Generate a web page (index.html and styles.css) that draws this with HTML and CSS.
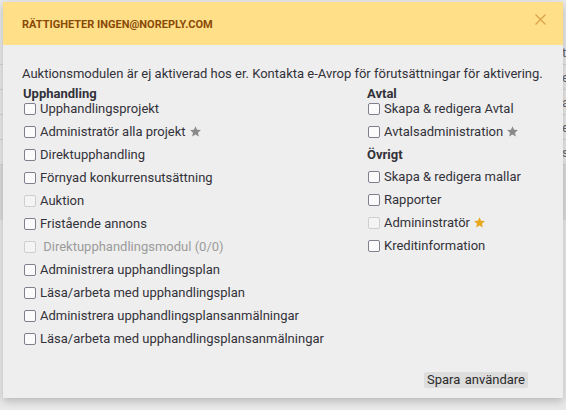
FILE: index.html
```html
<!DOCTYPE html>
<html lang="sv">
<head>
<meta charset="utf-8">
<title>Rättigheter</title>
<link rel="stylesheet" href="styles.css">
</head>
<body>
<div class="page">
  <div class="page-row"><span class="frag">t</span></div>
  <div class="page-row"><span class="frag">e</span></div>
  <div class="page-row"><span class="frag">a</span></div>
  <div class="page-row"><span class="frag">e</span></div>
  <div class="page-row"><span class="frag">s</span></div>
  <div class="page-block"></div>
</div>

<div class="modal">
  <div class="modal-header">
    <span class="modal-title">RÄTTIGHETER INGEN@NOREPLY.COM</span>
    <svg class="close" width="11" height="11" viewBox="0 0 11 11"><path d="M0.5 0.5L10.5 10.5M10.5 0.5L0.5 10.5" stroke="#d9a14a" stroke-width="1.2" fill="none"/></svg>
  </div>
  <div class="modal-body">
    <p class="notice">Auktionsmodulen är ej aktiverad hos er. Kontakta e-Avrop för förutsättningar för aktivering.</p>
    <div class="cols">
      <div class="col">
        <div class="heading">Upphandling</div>
        <label class="row"><span class="cb"></span>Upphandlingsprojekt</label>
        <label class="row"><span class="cb"></span>Administratör alla projekt<svg class="star" viewBox="0 0 24 24"><path d="M12 2.2l2.9 6.6 7.1.6-5.4 4.7 1.6 7-6.2-3.7-6.2 3.7 1.6-7L2 9.4l7.1-.6z" fill="#8a8a8a"/></svg></label>
        <label class="row"><span class="cb"></span>Direktupphandling</label>
        <label class="row"><span class="cb"></span>Förnyad konkurrensutsättning</label>
        <label class="row"><span class="cb cb-off"></span>Auktion</label>
        <label class="row"><span class="cb"></span>Fristående annons</label>
        <label class="row row-off"><span class="cb cb-off"></span>&nbsp;Direktupphandlingsmodul (0/0)</label>
        <label class="row"><span class="cb"></span>Administrera upphandlingsplan</label>
        <label class="row"><span class="cb"></span>Läsa/arbeta med upphandlingsplan</label>
        <label class="row"><span class="cb"></span>Administrera upphandlingsplansanmälningar</label>
        <label class="row"><span class="cb"></span>Läsa/arbeta med upphandlingsplansanmälningar</label>
      </div>
      <div class="col">
        <div class="heading">Avtal</div>
        <label class="row"><span class="cb"></span>Skapa &amp; redigera Avtal</label>
        <label class="row"><span class="cb"></span>Avtalsadministration<svg class="star" viewBox="0 0 24 24"><path d="M12 2.2l2.9 6.6 7.1.6-5.4 4.7 1.6 7-6.2-3.7-6.2 3.7 1.6-7L2 9.4l7.1-.6z" fill="#8a8a8a"/></svg></label>
        <div class="heading heading-sub">Övrigt</div>
        <label class="row"><span class="cb"></span>Skapa &amp; redigera mallar</label>
        <label class="row"><span class="cb"></span>Rapporter</label>
        <label class="row"><span class="cb cb-off"></span>Admininstratör<svg class="star" viewBox="0 0 24 24"><path d="M12 2.2l2.9 6.6 7.1.6-5.4 4.7 1.6 7-6.2-3.7-6.2 3.7 1.6-7L2 9.4l7.1-.6z" fill="#e8a81c"/></svg></label>
        <label class="row"><span class="cb"></span>Kreditinformation</label>
      </div>
    </div>
    <div class="footer">
      <button class="btn">Spara&nbsp; användare</button>
    </div>
  </div>
</div>
</body>
</html>
```

FILE: styles.css
```css
html, body {
  margin: 0;
  padding: 0;
}
body {
  width: 566px;
  height: 410px;
  overflow: hidden;
  background: #e9e9e9;
  font-family: Roboto, "Liberation Sans", sans-serif;
  position: relative;
}
.page {
  padding-top: 40px;
}
.page-row {
  height: 24px;
  border-bottom: 1px solid #d4d4d4;
  position: relative;
  font-size: 13px;
  color: #666;
}
.frag {
  position: absolute;
  left: 562px;
  top: 5px;
}
.page-block {
  height: 55px;
  background: #dcdcdc;
}
.modal {
  position: absolute;
  left: 3px;
  top: 2px;
  width: 560px;
  height: 396px;
  background: #eeeeee;
  box-shadow: 0 3px 8px rgba(0, 0, 0, 0.22);
  display: flex;
  flex-direction: column;
}
.modal-header {
  height: 43px;
  background: #ffdf88;
  display: flex;
  align-items: center;
  justify-content: space-between;
  padding: 0 17px 0 19px;
  box-sizing: border-box;
}
.modal-title {
  font-size: 11px;
  font-weight: bold;
  color: #8a4a07;
  letter-spacing: 0;
  margin-top: 2px;
}
.close {
  display: block;
  margin-top: -9px;
}
.modal-body {
  flex: 1;
  padding: 21px 19px 9px 20px;
  display: flex;
  flex-direction: column;
  color: #33323a;
  font-size: 13px;
}
.notice {
  margin: 0;
  line-height: 15px;
  height: 15px;
  white-space: nowrap;
  margin-left: -1px;
}
.cols {
  display: grid;
  grid-template-columns: 344px 1fr;
  margin-top: 5px;
}
.heading {
  font-weight: bold;
  line-height: 15px;
}
.heading-sub {
  margin-bottom: 7px;
}
.row {
  display: flex;
  align-items: center;
  line-height: 16px;
  height: 16px;
  margin-bottom: 7px;
  white-space: nowrap;
}
.row-off {
  color: #9b9b9b;
}
.cb {
  width: 10px;
  height: 10px;
  border: 1.5px solid #827e8e;
  border-radius: 2px;
  background: #fbfbfb;
  margin: 0 4px 0 1px;
  flex: none;
}
.cb-off {
  border-color: #cfcfcf;
  background: #f4f4f4;
}
.star {
  width: 13px;
  height: 13px;
  margin-left: 3px;
  margin-top: -1px;
}
.footer {
  margin-top: auto;
  display: flex;
  justify-content: flex-end;
  padding-right: 16px;
}
.btn {
  font-family: Roboto, "Liberation Sans", sans-serif;
  font-size: 13px;
  color: #2b2b2b;
  background: #dddddd;
  border: none;
  border-radius: 2px;
  height: 16px;
  padding: 0 3px;
  line-height: 16px;
  word-spacing: -1px;
  margin-bottom: 1px;
}
```
